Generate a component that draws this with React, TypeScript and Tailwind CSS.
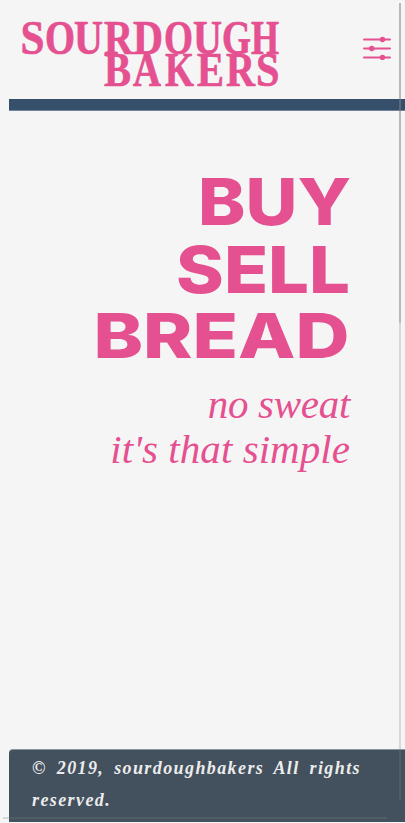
const logoTop = [
  ["S", 20.5, 24], ["O", 45, 30], ["U", 74, 29], ["R", 104, 29], ["D", 133, 30],
  ["O", 164, 29], ["U", 193, 29], ["G", 222, 29], ["H", 251, 28],
] as const;
const logoBottom = [
  ["B", 104, 27], ["A", 133, 28], ["K", 165, 29], ["E", 197, 27], ["R", 226, 29], ["S", 256, 23.5],
] as const;

function Logo() {
  return (
    <svg width="290" height="94" viewBox="0 0 290 94" className="block fill-[#e55090] stroke-[#e55090] font-['Liberation_Serif',serif] text-[48px] font-bold" strokeWidth="0.7" role="img" aria-label="Sourdough Bakers">
      {logoTop.map(([c, x, w], i) => (
        <text key={i} x={x} y="53.800" textLength={w} lengthAdjust="spacingAndGlyphs">{c}</text>
      ))}
      {logoBottom.map(([c, x, w], i) => (
        <text key={i} x={x} y="86.300" textLength={w} lengthAdjust="spacingAndGlyphs">{c}</text>
      ))}
    </svg>
  );
}

function MenuIcon() {
  return (
    <svg width="28" height="24" viewBox="0 0 28 24" className="fill-[#e55090] stroke-[#e55090]">
      <path d="M1 3.500h26M1 12.500h26M1 21.500h26" strokeWidth="2" strokeLinecap="round" />
      <g stroke="none">
        <circle cx="19.500" cy="3.500" r="2.700" />
        <circle cx="8.700" cy="12.500" r="2.700" />
        <circle cx="19.500" cy="21.500" r="2.700" />
      </g>
    </svg>
  );
}

export default function App() {
  return (
    <div className="relative flex h-[823px] w-full flex-col overflow-hidden bg-[#f5f5f5] text-[#e55090]">
      <header className="flex h-[99px] shrink-0 items-start justify-between pr-3.5">
        <Logo />
        <button className="mt-9" aria-label="Menu"><MenuIcon /></button>
      </header>
      <div className="ml-[9px] h-3 shrink-0 border-b border-[#70839a] bg-[#364f6b]" />
      <main className="flex grow flex-col items-end pt-[57px] pr-[55px]">
        <h1 className="flex flex-col items-end font-['Inter',sans-serif] text-[65px] leading-[67.500px] font-extrabold">
          <span className="-mr-px origin-right scale-x-[1.100]">BUY</span>
          <span className="origin-right scale-x-[1.115]">SELL</span>
          <span className="-mt-px origin-right scale-x-[1.205] text-[62px]">BREAD</span>
        </h1>
        <p className="mt-3 flex flex-col items-end font-['Liberation_Serif',serif] text-[41px] leading-[45px] italic">
          <span className="tracking-[-0.300px]">no sweat</span>
          <span className="tracking-[0.050px]">it's that simple</span>
        </p>
      </main>
      <footer className="mb-px ml-[9px] h-[73px] shrink-0 rounded-tl border-t border-[#8c959e] bg-[#43505d] pt-[2px] pl-[23px] font-['Liberation_Serif',serif] text-[18px] leading-8 font-bold tracking-[1.400px] [word-spacing:4px] text-[#ececec] italic">
        <p className="whitespace-nowrap">© 2019, sourdoughbakers All rights</p>
        <p>reserved.</p>
      </footer>
      <div className="absolute top-[3px] left-[398.500px] h-[797px] w-[2.500px] bg-[#808080]/25" />
      <div className="absolute top-[3px] left-[398.500px] h-[320px] w-[2.500px] bg-[#808080]/35" />
      <div className="absolute top-[816.500px] left-[3px] h-[2.500px] w-[384px] bg-[#808080]/25" />
    </div>
  );
}
